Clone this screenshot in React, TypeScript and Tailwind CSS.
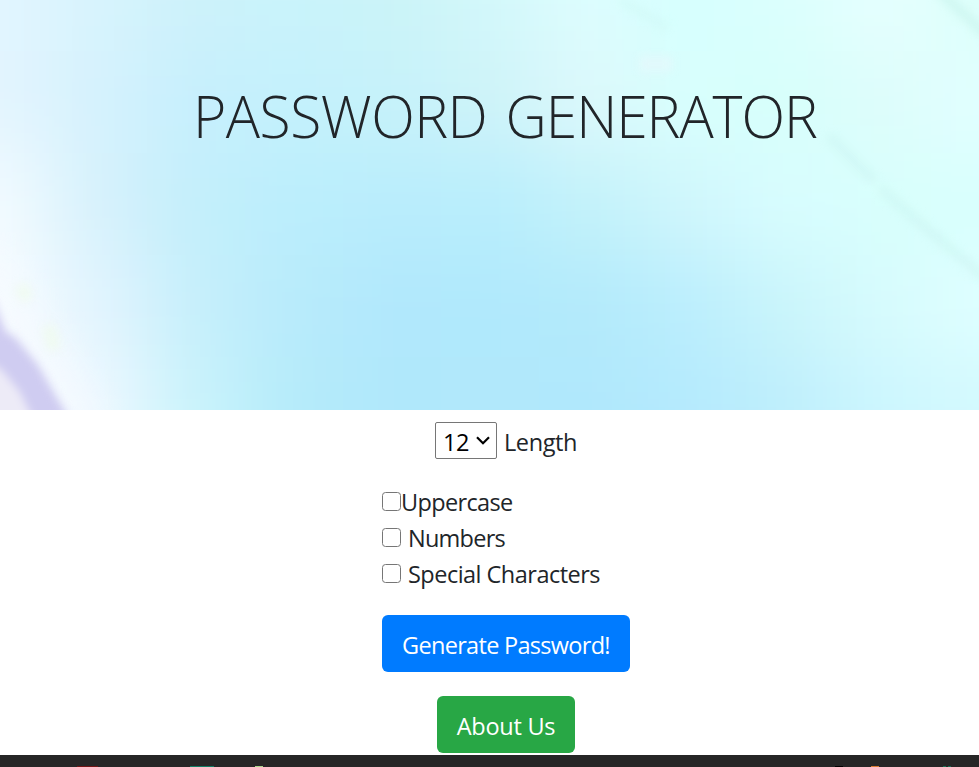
const MESH = [
  ["#e2f5ff", "#d7f3fd", "#cdf2fa", "#c9f3fb", "#cbf3f8", "#d3f8fa", "#ddfdfe", "#d6fffe", "#dbfffd", "#e6fffe", "#dcfffb"],
  ["#e3f4fe", "#d5f2fd", "#c6effd", "#c4f1fc", "#c6f2fa", "#cef3f9", "#dcf8fb", "#d8fffd", "#d7fffb", "#ddfdfb", "#e2ffff"],
  ["#f3fbff", "#d6f1fc", "#c3effb", "#bbeefc", "#b9edfc", "#b9eefc", "#c3f2fa", "#d0f6fc", "#d8fdff", "#d8fffc", "#d8fffd"],
  ["#f8fcff", "#e2f4fe", "#c6effb", "#b8ebfb", "#b1e8fc", "#b0e9fc", "#b3eafb", "#bbeefd", "#caf5fb", "#d7fbfd", "#dfffff"],
  ["#fdfcff", "#eef8ff", "#c9f3fb", "#b5ebfa", "#b0e8fb", "#b1e8fb", "#b0e8fc", "#b4eafd", "#beeefc", "#ccf6fe", "#d3f9fe"],
];

function Backdrop() {
  return (
    <svg className="absolute inset-0 h-full w-full" viewBox="0 0 979 410" preserveAspectRatio="none" aria-hidden="true">
      <defs>
        <filter id="soft" filterUnits="userSpaceOnUse" x="-250" y="-250" width="1480" height="910" colorInterpolationFilters="sRGB">
          <feGaussianBlur stdDeviation="38" />
        </filter>
        <filter id="pale" filterUnits="userSpaceOnUse" x="-80" y="100" width="350" height="400" colorInterpolationFilters="sRGB">
          <feGaussianBlur stdDeviation="14" />
        </filter>
        <filter id="fine" filterUnits="userSpaceOnUse" x="-50" y="-50" width="1080" height="510" colorInterpolationFilters="sRGB">
          <feGaussianBlur stdDeviation="5" />
        </filter>
        <filter id="edge" filterUnits="userSpaceOnUse" x="-50" y="250" width="200" height="220" colorInterpolationFilters="sRGB">
          <feGaussianBlur stdDeviation="4" />
        </filter>
      </defs>
      <g filter="url(#soft)">
        {MESH.map((row, r) =>
          row.map((fill, c) => {
            const left = c === 0 ? -200 : c * 98 - 49;
            const right = c === 10 ? 1180 : c * 98 + 50;
            const top = r === 0 ? -200 : r * 102 - 51;
            const bottom = r === 4 ? 610 : r * 102 + 52;
            return <rect key={`${r}-${c}`} x={left} y={top} width={right - left} height={bottom - top} fill={fill} />;
          })
        )}
      </g>
      <path d="M-20 260 L25 320 L90 430" stroke="#f6faff" strokeWidth="44" opacity=".5" fill="none" filter="url(#pale)" />
      <g filter="url(#fine)" fill="none">
        <path d="M620 0 L668 28" stroke="#cdf8f4" strokeWidth="8" opacity=".5" />
        <path d="M940 -8 L990 38" stroke="#c8f3ec" strokeWidth="9" opacity=".75" />
        <path d="M829 136 L874 181 M880 188 L928 230 L990 282" stroke="#c8f2ef" strokeWidth="7" opacity=".6" />
        <path d="M640 64 H672" stroke="#e5f7fb" strokeWidth="14" opacity=".8" />
        <path d="M20 285 L28 300 M48 325 L54 350" stroke="#effbe9" strokeWidth="14" opacity=".6" />
      </g>
      <g filter="url(#edge)">
        <path d="M-10 292 L6 332 L15 337 L38 365 L70 420 H-10Z" fill="#cfccf1" />
        <path d="M-12 362 L2 370 L20 392 L36 425 H-12Z" fill="#edebf7" />
      </g>
    </svg>
  );
}

function Checkbox() {
  return (
    <input
      type="checkbox"
      className="block h-[19px] w-[19px] shrink-0 appearance-none rounded-[3.5px] border border-[#767676] bg-white"
    />
  );
}

export default function App() {
  return (
    <div className="flex h-[767px] w-[979px] flex-col overflow-hidden bg-white font-['Open_Sans','Noto_Sans',sans-serif] text-[23.5px] text-[#212529]">
      <header className="relative flow-root h-[410px] shrink-0 overflow-hidden">
        <Backdrop />
        <h1 className="relative ml-[193px] mt-[75px] origin-left scale-x-[0.966] whitespace-nowrap text-[59px] font-light leading-[80px] tracking-[-0.5px] [word-spacing:4px]">
          PASSWORD <span className="tracking-[-1.1px]">GENERATOR</span>
        </h1>
      </header>

      <main className="flex h-[345px] shrink-0 flex-col pt-3">
        <label className="ml-[435px] flex h-[37px] items-center">
          <span className="relative block h-[37px] w-[62px]">
            <select className="h-full w-full appearance-none rounded-[2px] border border-[#767676] bg-white pl-[7px] pt-[3px] leading-[32px] tracking-[-0.4px] text-black" defaultValue="12">
              <option>12</option>
            </select>
            <svg className="pointer-events-none absolute left-[41px] top-[14px]" width="14" height="10" viewBox="0 0 14 10" fill="none" stroke="#000" strokeWidth="2.2" aria-hidden="true">
              <path d="M1 1.2 7 7.2 13 1.2" />
            </svg>
          </span>
          <span className="ml-[7px] mt-[3px] leading-9 tracking-[-0.4px]">Length</span>
        </label>

        <div className="ml-[382px] mt-[26px] flex flex-col">
          <label className="flex h-9 items-start">
            <span className="pt-[7px]"><Checkbox /></span>
            <span className="-mt-px leading-9 tracking-[-0.65px]">Uppercase</span>
          </label>
          <label className="flex h-9 items-start">
            <span className="pt-[7px]"><Checkbox /></span>
            <span className="-mt-px ml-[7px] leading-9 tracking-[-0.75px]">Numbers</span>
          </label>
          <label className="flex h-9 items-start">
            <span className="pt-[7px]"><Checkbox /></span>
            <span className="-mt-px ml-[7px] whitespace-nowrap leading-9 tracking-[-0.52px]">Special Characters</span>
          </label>
        </div>

        <button className="ml-[382px] mt-[22px] h-[57px] w-[248px] shrink-0 whitespace-nowrap rounded-[6px] bg-[#007bff] pt-1 tracking-[-0.7px] text-white">
          Generate Password!
        </button>
        <button className="ml-[437px] mt-6 h-[57px] w-[138px] shrink-0 whitespace-nowrap rounded-[6px] bg-[#28a745] pt-1 tracking-[-0.25px] text-white">
          About Us
        </button>
      </main>

      <footer className="flex h-3 shrink-0 items-end overflow-hidden bg-[#262626]">
        <i className="ml-[77px] h-px w-[21px] bg-[#701516]" />
        <i className="ml-[92px] h-px w-6 bg-[#107c63]" />
        <i className="ml-[41px] h-px w-2 bg-[#a8d58c]" />
        <i className="ml-[572px] h-px w-2 bg-black" />
        <i className="ml-[28px] h-px w-2 bg-[#d77a32]" />
        <i className="ml-[64px] h-px w-[3px] bg-[#176f53]" />
        <i className="ml-[2px] h-px w-[3px] bg-[#176f53]" />
      </footer>
    </div>
  );
}
